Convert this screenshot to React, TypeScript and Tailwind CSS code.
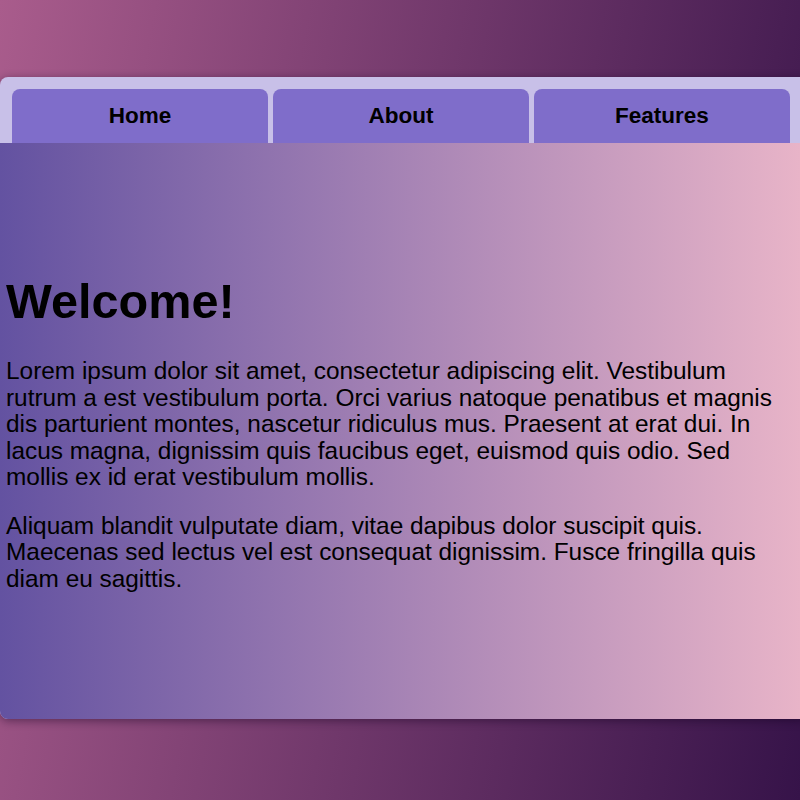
import React from 'react';

const tabs = ['Home', 'About', 'Features'];

export default function App() {
  return (
    <div
      className="min-h-[800px] w-full overflow-hidden pt-[77px] bg-[linear-gradient(100deg,#a95c8c_0%,#361349_100%)]"
      style={{ fontFamily: '"Liberation Sans", Arial, sans-serif' }}
    >
      <div className="w-[804px] rounded-l-lg overflow-hidden bg-[#c8c0e8] shadow-[0_2px_10px_rgba(20,0,30,0.45)]">
        {/* tab strip */}
        <div className="flex gap-[5px] pl-3 pr-[14px] pt-3">
          {tabs.map((t) => (
            <div
              key={t}
              className="flex-1 h-[54px] rounded-t-lg bg-[#7f6dca] flex items-center justify-center text-[22.5px] font-bold text-black"
            >
              {t}
            </div>
          ))}
        </div>

        {/* content */}
        <div className="h-[576px] w-[800px] pt-[131px] px-[6px] bg-[linear-gradient(90deg,#6352a1_0%,#e8b4c8_100%)] text-black">
          <h1 className="text-[48.6px] font-bold leading-[54px]">Welcome!</h1>
          <p className="mt-[30px] text-[24.4px] leading-[26.5px]">
            Lorem ipsum dolor sit amet, consectetur adipiscing elit. Vestibulum rutrum a est vestibulum porta. Orci varius natoque penatibus et magnis dis parturient montes, nascetur ridiculus mus. Praesent at erat dui. In lacus magna, dignissim quis faucibus eget, euismod quis odio. Sed mollis ex id erat vestibulum mollis.
          </p>
          <p className="mt-[22px] text-[24.4px] leading-[26.5px]">
            Aliquam blandit vulputate diam, vitae dapibus dolor suscipit quis. Maecenas sed lectus vel est consequat dignissim. Fusce fringilla quis diam eu sagittis.
          </p>
        </div>
      </div>
    </div>
  );
}
